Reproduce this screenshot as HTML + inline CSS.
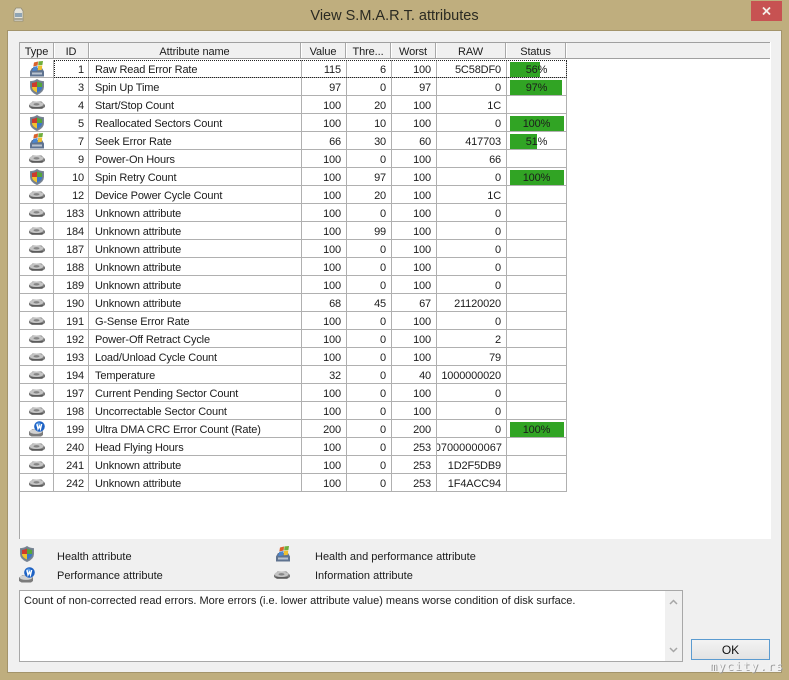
<!DOCTYPE html>
<html><head><meta charset="utf-8">
<style>
html,body{margin:0;padding:0}
body{width:789px;height:680px;position:relative;overflow:hidden;background:#bfae7e;font-family:"Liberation Sans",sans-serif;font-size:11px;color:#1c1c1c}
.a{position:absolute}
#win{left:8px;top:31px;width:773px;height:641px;background:#f0f0f0;box-shadow:0 0 0 1px #a3946b}
#list{left:19px;top:42px;width:752px;height:497px;background:#fff;border-left:1px solid #a8a8a8;box-sizing:border-box}
#hd{left:20px;top:42px;width:750px;height:17px;background:#f0f0f0;border-top:1px solid #a0a0a0;border-bottom:1px solid #a0a0a0;box-sizing:border-box;letter-spacing:-.1px}
#hd span{position:absolute;top:0;height:15px;line-height:19px;text-align:center;border-right:1px solid #a8a8a8;box-sizing:border-box;box-shadow:1px 0 0 #fff}
table{position:absolute;left:20px;top:60px;border-collapse:separate;border-spacing:0;table-layout:fixed;width:547px;letter-spacing:-.15px}
td{height:13px;padding:4px 5px 0 0;border-right:1px solid #b0b0b0;border-bottom:1px solid #b0b0b0;text-align:right;white-space:nowrap;overflow:hidden;line-height:13px;position:relative;box-sizing:content-box;vertical-align:top}
td:nth-child(1){padding:0;height:17px}
td:nth-child(2){padding-right:4px}
td:nth-child(3){text-align:left;padding:4px 0 0 6px}
td:nth-child(8){padding:4px 0 0 0;text-align:center}
td svg{display:block;margin:1px 0 0 9px}
.b{position:absolute;left:3px;top:2px;height:15px;background:#31a424}
.t{position:relative}
#focus{left:54px;top:60px;width:513px;height:18px;border:1px dotted #222;box-sizing:border-box}
.leg{height:16px;line-height:18px}
#desc{left:19px;top:590px;width:664px;height:72px;background:#fff;border:1px solid #a8a8a8;box-sizing:border-box;padding:4px 4px;line-height:13px}
#sb{left:665px;top:591px;width:17px;height:70px;background:#f0f0f0}
#ok{left:691px;top:639px;width:79px;height:21px;box-sizing:border-box;border:1px solid #5b9bd0;background:linear-gradient(#f3f3f3,#e3e3e3);text-align:center;line-height:21px;color:#111;font-size:12px}
#close{left:751px;top:1px;width:31px;height:20px;background:#c75252}
#title{left:0;top:6px;width:789px;text-align:center;font-size:14.5px;line-height:20px;color:#2a2a22}
#wm{left:710px;top:659px;font-family:"DejaVu Sans Mono","Liberation Mono",monospace;font-size:11.5px;line-height:14px;color:#f4f4f4;text-shadow:1px 1px 0 #999;letter-spacing:1.3px}
</style></head>
<body>
<svg width="0" height="0" style="position:absolute">
<defs>
<symbol id="s" viewBox="0 0 16 16">
<path d="M8 .5C6 2 4 2.400 1.500 2.600V8c0 3.600 3 6 6.500 7.500 3.500-1.500 6.500-3.900 6.500-7.500V2.600C12 2.400 10 2 8 .5z" fill="#6f7f92" stroke="#7c8794"/>
<path d="M8 2.500C6.500 3.400 5 3.800 3 4v4h5z" fill="#cf3a2c"/>
<path d="M8 2.500c1.500.9 3 1.300 5 1.500v4H8z" fill="#55a63a"/>
<path d="M3 8h5v5.500C5.500 12.400 3 10.800 3 8z" fill="#f1c22e"/>
<path d="M8 8h5c0 2.800-2.500 4.400-5 5.500z" fill="#3b78c9"/>
</symbol>
<symbol id="w" viewBox="0 0 16 16">
<path d="M1 10.500 3 7h10l2 3.500V15.500H1z" fill="#5f7390"/>
<path d="M3 11.500h10v2H3z" fill="#b9c3cf"/>
<path d="M5 1.500 9 .5 8.700 4.500 4.300 5.500z" fill="#d9622b"/>
<path d="M9.500.4 14 0 13.400 4 9.200 4.400z" fill="#6fae3c"/>
<path d="M4.200 6 8.600 5 8.200 9.400 3.300 10z" fill="#4a86d0"/>
<path d="M9.100 4.900 13.300 4.500 12.700 9 8.700 9.300z" fill="#efc02f"/>
</symbol>
<symbol id="h" viewBox="0 0 16 16">
<path d="M0 8 3.500 4.500h9L16 8v2l-3 2H3L0 10z" fill="#7a7a7a"/>
<ellipse cx="7.500" cy="7.300" rx="7" ry="2.800" fill="#c4c4c4"/>
<ellipse cx="7.500" cy="7.300" rx="3" ry="1.200" fill="#858585"/>
<path d="M1.500 10.500 H14" stroke="#5c5c5c" stroke-width="1"/>
</symbol>
<symbol id="p" viewBox="0 0 16 16">
<path d="M0 10.500 3.500 8h8.500l2 2.500v3.500l-2 1.500H2.500L0 14z" fill="#7c7c7c"/>
<ellipse cx="7" cy="10.500" rx="6.300" ry="2.400" fill="#d2d2d2"/>
<circle cx="10.500" cy="5.500" r="5.300" fill="#1e62c4"/>
<circle cx="9.500" cy="4" r="2.500" fill="#5a9ae6"/>
<path d="M8 3l1 5 1.500-3 1 3 1.200-5" fill="none" stroke="#fff" stroke-width="1.300"/>
</symbol>
</defs>
</svg>

<div class="a" id="win"></div>
<svg class="a" style="left:12px;top:7px" width="14" height="17" viewBox="0 0 14 17"><path d="M2 4 4 1h5l2 3v10H2z" fill="#e6e4da" stroke="#8d8a78" stroke-width=".7"/><path d="M3 6h7v4H3z" fill="#8fa4b4"/><path d="M2.500 11h8v2h-8z" fill="#a8a596"/></svg>
<div class="a" id="title">View S.M.A.R.T. attributes</div>
<div class="a" id="close"><svg class="a" style="left:11px;top:6px" width="9" height="8" viewBox="0 0 9 8"><path d="M1 .5 8 7.500M8 .5 1 7.500" stroke="#f5efe8" stroke-width="1.800"/></svg></div>

<div class="a" id="list"></div>
<div class="a" id="hd">
<span style="left:0;width:34px">Type</span>
<span style="left:34px;width:35px">ID</span>
<span style="left:69px;width:212px">Attribute name</span>
<span style="left:281px;width:45px">Value</span>
<span style="left:326px;width:45px">Thre...</span>
<span style="left:371px;width:45px">Worst</span>
<span style="left:416px;width:70px">RAW</span>
<span style="left:486px;width:60px">Status</span>
</div>

<table>
<colgroup><col style="width:34px"><col style="width:35px"><col style="width:213px"><col style="width:45px"><col style="width:45px"><col style="width:45px"><col style="width:70px"><col style="width:60px"></colgroup>
<tr><td><svg width="16" height="16"><use href="#w"/></svg></td><td>1</td><td>Raw Read Error Rate</td><td>115</td><td>6</td><td>100</td><td>5C58DF0</td><td><div class="b" style="width:30px"></div><span class="t">56%</span></td></tr>
<tr><td><svg width="16" height="16"><use href="#s"/></svg></td><td>3</td><td>Spin Up Time</td><td>97</td><td>0</td><td>97</td><td>0</td><td><div class="b" style="width:52px"></div><span class="t">97%</span></td></tr>
<tr><td><svg width="16" height="16"><use href="#h"/></svg></td><td>4</td><td>Start/Stop Count</td><td>100</td><td>20</td><td>100</td><td>1C</td><td></td></tr>
<tr><td><svg width="16" height="16"><use href="#s"/></svg></td><td>5</td><td>Reallocated Sectors Count</td><td>100</td><td>10</td><td>100</td><td>0</td><td><div class="b" style="width:54px"></div><span class="t">100%</span></td></tr>
<tr><td><svg width="16" height="16"><use href="#w"/></svg></td><td>7</td><td>Seek Error Rate</td><td>66</td><td>30</td><td>60</td><td>417703</td><td><div class="b" style="width:27px"></div><span class="t">51%</span></td></tr>
<tr><td><svg width="16" height="16"><use href="#h"/></svg></td><td>9</td><td>Power-On Hours</td><td>100</td><td>0</td><td>100</td><td>66</td><td></td></tr>
<tr><td><svg width="16" height="16"><use href="#s"/></svg></td><td>10</td><td>Spin Retry Count</td><td>100</td><td>97</td><td>100</td><td>0</td><td><div class="b" style="width:54px"></div><span class="t">100%</span></td></tr>
<tr><td><svg width="16" height="16"><use href="#h"/></svg></td><td>12</td><td>Device Power Cycle Count</td><td>100</td><td>20</td><td>100</td><td>1C</td><td></td></tr>
<tr><td><svg width="16" height="16"><use href="#h"/></svg></td><td>183</td><td>Unknown attribute</td><td>100</td><td>0</td><td>100</td><td>0</td><td></td></tr>
<tr><td><svg width="16" height="16"><use href="#h"/></svg></td><td>184</td><td>Unknown attribute</td><td>100</td><td>99</td><td>100</td><td>0</td><td></td></tr>
<tr><td><svg width="16" height="16"><use href="#h"/></svg></td><td>187</td><td>Unknown attribute</td><td>100</td><td>0</td><td>100</td><td>0</td><td></td></tr>
<tr><td><svg width="16" height="16"><use href="#h"/></svg></td><td>188</td><td>Unknown attribute</td><td>100</td><td>0</td><td>100</td><td>0</td><td></td></tr>
<tr><td><svg width="16" height="16"><use href="#h"/></svg></td><td>189</td><td>Unknown attribute</td><td>100</td><td>0</td><td>100</td><td>0</td><td></td></tr>
<tr><td><svg width="16" height="16"><use href="#h"/></svg></td><td>190</td><td>Unknown attribute</td><td>68</td><td>45</td><td>67</td><td>21120020</td><td></td></tr>
<tr><td><svg width="16" height="16"><use href="#h"/></svg></td><td>191</td><td>G-Sense Error Rate</td><td>100</td><td>0</td><td>100</td><td>0</td><td></td></tr>
<tr><td><svg width="16" height="16"><use href="#h"/></svg></td><td>192</td><td>Power-Off Retract Cycle</td><td>100</td><td>0</td><td>100</td><td>2</td><td></td></tr>
<tr><td><svg width="16" height="16"><use href="#h"/></svg></td><td>193</td><td>Load/Unload Cycle Count</td><td>100</td><td>0</td><td>100</td><td>79</td><td></td></tr>
<tr><td><svg width="16" height="16"><use href="#h"/></svg></td><td>194</td><td>Temperature</td><td>32</td><td>0</td><td>40</td><td>1000000020</td><td></td></tr>
<tr><td><svg width="16" height="16"><use href="#h"/></svg></td><td>197</td><td>Current Pending Sector Count</td><td>100</td><td>0</td><td>100</td><td>0</td><td></td></tr>
<tr><td><svg width="16" height="16"><use href="#h"/></svg></td><td>198</td><td>Uncorrectable Sector Count</td><td>100</td><td>0</td><td>100</td><td>0</td><td></td></tr>
<tr><td><svg width="16" height="16"><use href="#p"/></svg></td><td>199</td><td>Ultra DMA CRC Error Count (Rate)</td><td>200</td><td>0</td><td>200</td><td>0</td><td><div class="b" style="width:54px"></div><span class="t">100%</span></td></tr>
<tr><td><svg width="16" height="16"><use href="#h"/></svg></td><td>240</td><td>Head Flying Hours</td><td>100</td><td>0</td><td>253</td><td style="direction:rtl;letter-spacing:0">07000000067</td><td></td></tr>
<tr><td><svg width="16" height="16"><use href="#h"/></svg></td><td>241</td><td>Unknown attribute</td><td>100</td><td>0</td><td>253</td><td>1D2F5DB9</td><td></td></tr>
<tr><td><svg width="16" height="16"><use href="#h"/></svg></td><td>242</td><td>Unknown attribute</td><td>100</td><td>0</td><td>253</td><td>1F4ACC94</td><td></td></tr>
</table>
<div class="a" id="focus"></div>

<svg class="a" style="left:19px;top:546px" width="16" height="16"><use href="#s"/></svg>
<svg class="a" style="left:19px;top:567px" width="16" height="16"><use href="#p"/></svg>
<svg class="a" style="left:275px;top:546px" width="16" height="16"><use href="#w"/></svg>
<svg class="a" style="left:274px;top:567px" width="16" height="16"><use href="#h"/></svg>
<div class="a leg" style="left:57px;top:548px">Health attribute</div>
<div class="a leg" style="left:57px;top:567px">Performance attribute</div>
<div class="a leg" style="left:315px;top:548px">Health and performance attribute</div>
<div class="a leg" style="left:315px;top:567px">Information attribute</div>

<div class="a" id="desc">Count of non-corrected read errors. More errors (i.e. lower attribute value) means worse condition of disk surface.</div>
<div class="a" id="sb">
<svg class="a" style="left:4px;top:8px" width="9" height="6"><path d="M1 5 4.500 1.500 8 5" fill="none" stroke="#a6a6a6" stroke-width="1.500"/></svg>
<svg class="a" style="left:4px;top:56px" width="9" height="6"><path d="M1 1 4.500 4.500 8 1" fill="none" stroke="#a6a6a6" stroke-width="1.500"/></svg>
</div>
<div class="a" id="ok">OK</div>
<div class="a" id="wm">mycity.rs</div>
</body></html>
